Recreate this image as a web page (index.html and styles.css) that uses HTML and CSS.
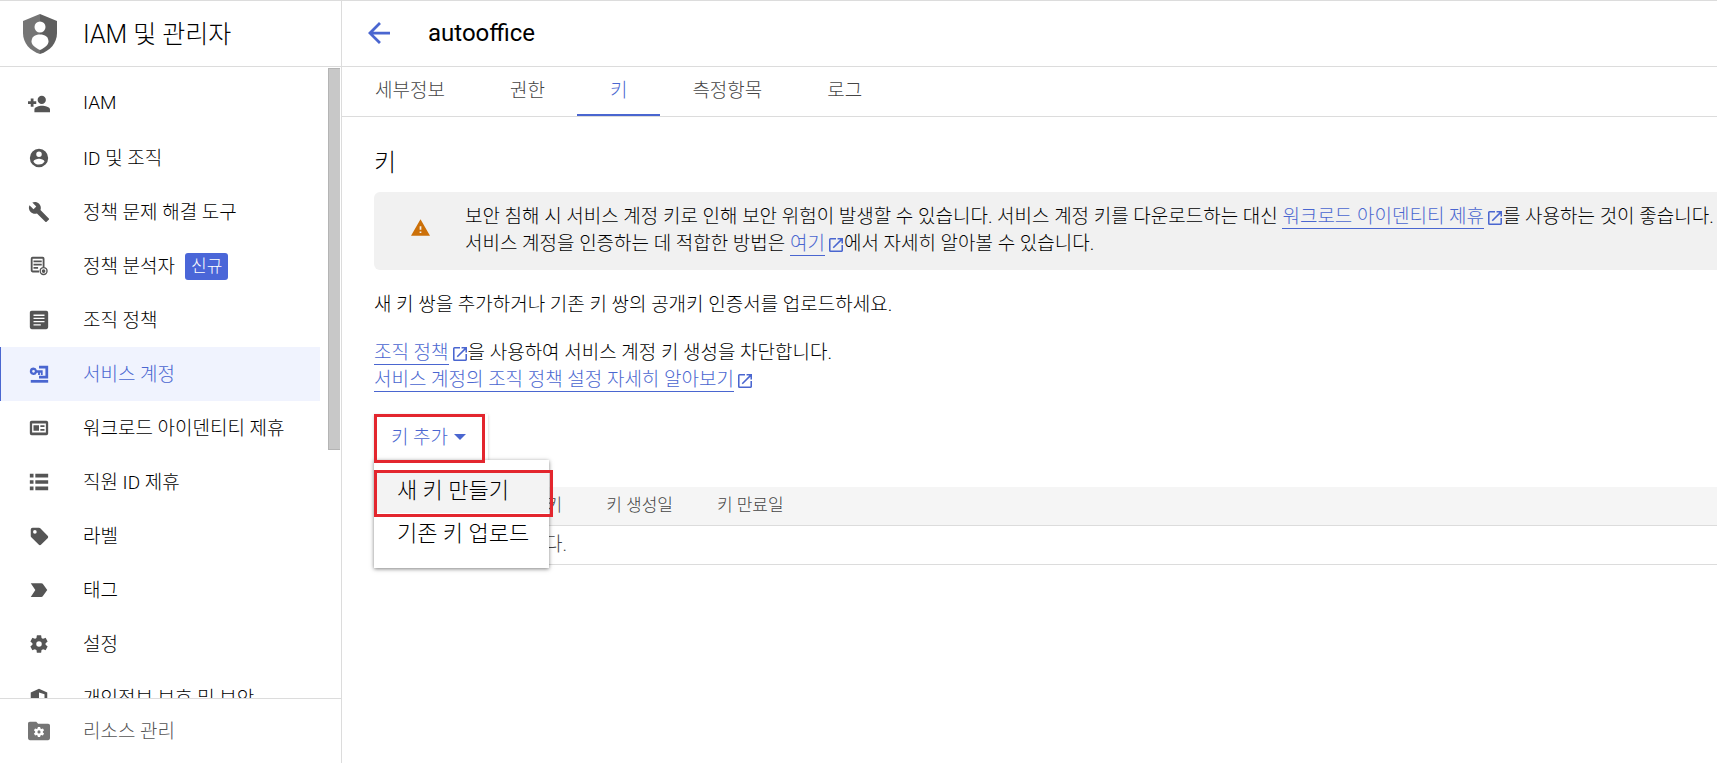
FILE: index.html
```html
<!DOCTYPE html>
<html lang="ko">
<head>
    <meta charset="UTF-8">
    <meta name="viewport" content="width=device-width, initial-scale=1.0">
    <title>IAM 및 관리자 - autooffice</title>
    <link rel="stylesheet" href="styles.css">
</head>
<body>
    <svg class="defs" aria-hidden="true">
        <symbol id="open-new" viewBox="3 3 18 18">
            <path d="M19 19H5V5h7V3H5a2 2 0 0 0-2 2v14a2 2 0 0 0 2 2h14c1.100 0 2-.9 2-2v-7h-2v7zM14 3v2h3.590l-9.830 9.830 1.410 1.410L19 6.410V10h2V3h-7z"/>
        </symbol>
    </svg>
    <div class="app">
        <aside class="sidebar">
            <div class="product">
                <svg class="shield" viewBox="0 0 34 40">
                    <path fill="#757575" d="M17 0 0 7v12c0 10 7 18 17 21z"/>
                    <path fill="#5f5f5f" d="M17 0l17 7v12c0 10-7 18-17 21z"/>
                    <circle cx="17" cy="13" r="5.500" fill="#fff"/>
                    <path fill="#fff" d="M17 20.500c5 0 8.500 2.500 8.500 7 0 3.500-4 6.500-8.500 8.500-4.500-2-8.500-5-8.500-8.500 0-4.500 3.500-7 8.500-7z"/>
                </svg>
                <span class="label">IAM 및 관리자</span>
            </div>
            <div class="nav-area">
                <nav class="nav">
                    <a href="#" class="nav-item">
                        <svg viewBox="0 0 24 24"><path d="M15 12a4.500 4.500 0 1 0 0-9 4.500 4.500 0 0 0 0 9zM6 9V6H3v3H0v3h3v3h3v-3h3V9H6zm9 5c-2.670 0-8 1.340-8 4v3h17v-3c0-2.660-5.330-4-9-4z"/></svg>
                        <span class="label">IAM</span>
                    </a>
                    <a href="#" class="nav-item">
                        <svg viewBox="0 0 24 24"><path d="M12 2a10 10 0 1 0 0 20 10 10 0 0 0 0-20zm0 3a3 3 0 1 1 0 6 3 3 0 0 1 0-6zm0 14.200a7.200 7.200 0 0 1-6-3.220c.03-1.990 4-3.080 6-3.080s5.970 1.090 6 3.080a7.200 7.200 0 0 1-6 3.220z"/></svg>
                        <span class="label">ID 및 조직</span>
                    </a>
                    <a href="#" class="nav-item">
                        <svg viewBox="0 0 24 24"><path d="M22.700 19l-9.100-9.100c.9-2.300.4-5-1.500-6.900-2-2-5-2.400-7.400-1.300L9 6 6 9 1.600 4.700C.4 7.100.9 10.100 2.900 12.100c1.900 1.900 4.600 2.400 6.900 1.500l9.100 9.100c.4.400 1 .4 1.400 0l2.300-2.300c.5-.4.5-1.100.1-1.400z"/></svg>
                        <span class="label">정책 문제 해결 도구</span>
                    </a>
                    <a href="#" class="nav-item">
                        <svg viewBox="0 0 24 24"><path d="M5 2h11a2 2 0 0 1 2 2v9h-2V4H5v13h7v2H5a2 2 0 0 1-2-2V4a2 2 0 0 1 2-2z"/><path d="M6 6h9v2H6zM6 9.500h9v2H6zM6 13h5v2H6z"/><path fill-rule="evenodd" d="M17 13a4.500 4.500 0 1 0 0 9 4.500 4.500 0 0 0 0-9zm0 1.500a3 3 0 1 1 0 6 3 3 0 0 1 0-6zm0 1a2 2 0 1 0 0 4 2 2 0 0 0 0-4z"/></svg>
                        <span class="label">정책 분석자</span>
                        <span class="badge">신규</span>
                    </a>
                    <a href="#" class="nav-item">
                        <svg viewBox="0 0 24 24"><path fill-rule="evenodd" d="M4 2h16a2 2 0 0 1 2 2v16a2 2 0 0 1-2 2H4a2 2 0 0 1-2-2V4c0-1.100.9-2 2-2zm2 4v1.500h12V6zm0 3.500V11h12V9.500zM6 13v1.500h12V13zm0 3.500V18h8v-1.500z"/></svg>
                        <span class="label">조직 정책</span>
                    </a>
                    <a href="#" class="nav-item active">
                        <svg viewBox="0 0 24 24"><path d="M12 3h10v14H12v-3h7V6h-7z"/><path fill-rule="evenodd" d="M6 5a4 4 0 1 0 3.700 5.500H11V13h2v-2.500h1V13h2V8H9.700A4 4 0 0 0 6 5zm0 2.500a1.500 1.500 0 1 1 0 3 1.500 1.500 0 0 1 0-3z"/><path d="M3 18.500h19v3H3z"/></svg>
                        <span class="label">서비스 계정</span>
                    </a>
                    <a href="#" class="nav-item">
                        <svg viewBox="0 0 24 24"><path fill-rule="evenodd" d="M4 4h16a2 2 0 0 1 2 2v12a2 2 0 0 1-2 2H4a2 2 0 0 1-2-2V6c0-1.100.9-2 2-2zm.5 3v10h15V7z"/><path d="M6 9h6v6H6zM13.500 9H18v2h-4.500zM13.500 13H18v2h-4.500z"/></svg>
                        <span class="label">워크로드 아이덴티티 제휴</span>
                    </a>
                    <a href="#" class="nav-item">
                        <svg viewBox="0 0 24 24"><path d="M2 3h4v4H2zM8 3h14v4H8zM2 10h4v4H2zM8 10h14v4H8zM2 17h4v4H2zM8 17h14v4H8z"/></svg>
                        <span class="label">직원 ID 제휴</span>
                    </a>
                    <a href="#" class="nav-item">
                        <svg viewBox="0 0 24 24"><path fill-rule="evenodd" d="M21.400 11.600l-8-8A2 2 0 0 0 12 3H5a2 2 0 0 0-2 2v7c0 .6.2 1 .6 1.400l8 8c.8.8 2 .8 2.800 0l7-7c.8-.8.8-2 0-2.800zM7.500 5.500a2 2 0 1 1 0 4 2 2 0 0 1 0-4z"/></svg>
                        <span class="label">라벨</span>
                    </a>
                    <a href="#" class="nav-item">
                        <svg viewBox="0 0 24 24"><path d="M3 19.500h11.500c.7 0 1.300-.3 1.600-.8L21 12l-4.900-6.700c-.3-.5-.9-.8-1.600-.8H3L8 12z"/></svg>
                        <span class="label">태그</span>
                    </a>
                    <a href="#" class="nav-item">
                        <svg viewBox="0 0 24 24"><path d="M19.140 12.940c.04-.3.06-.61.06-.94 0-.32-.02-.64-.07-.94l2.030-1.580a.49.49 0 0 0 .12-.61l-1.920-3.320a.49.49 0 0 0-.59-.22l-2.390.96a7 7 0 0 0-1.620-.94l-.36-2.540a.48.48 0 0 0-.48-.41h-3.840a.47.47 0 0 0-.47.41l-.36 2.540a7.400 7.400 0 0 0-1.620.94l-2.390-.96a.48.48 0 0 0-.59.22L2.740 8.870a.47.47 0 0 0 .12.61l2.030 1.580a6 6 0 0 0-.02 1.880l-2.030 1.580a.49.49 0 0 0-.12.61l1.920 3.320c.12.220.37.290.59.220l2.390-.96c.5.380 1.030.7 1.620.94l.36 2.540c.05.240.240.410.48.410h3.840c.24 0 .44-.17.47-.41l.36-2.540a7 7 0 0 0 1.620-.94l2.390.96c.22.080.47 0 .59-.22l1.920-3.320a.47.47 0 0 0-.12-.61zM12 15a3 3 0 1 1 0-6 3 3 0 0 1 0 6z"/></svg>
                        <span class="label">설정</span>
                    </a>
                    <a href="#" class="nav-item">
                        <svg viewBox="0 0 24 24"><path fill-rule="evenodd" d="M12 2l9 4v6c0 5-4 9-9 11-5-2-9-6-9-11V6zm0 4v14c4-2 6-5 6-8V8z"/></svg>
                        <span class="label">개인정보 보호 및 보안</span>
                    </a>
                </nav>
                <div class="scroll-thumb"></div>
            </div>
            <a href="#" class="nav-footer">
                <svg viewBox="0 0 24 24"><path d="M2 2h7l2 2h11a2 2 0 0 1 2 2v14a2 2 0 0 1-2 2H2a2 2 0 0 1-2-2V4c0-1.100.9-2 2-2z"/><path fill="#fff" fill-rule="evenodd" d="M10.800 7.500h2.400l.4 1.700 1 .6 1.700-.6 1.200 2.100-1.300 1.200v1l1.300 1.200-1.200 2.100-1.700-.5-1 .6-.4 1.700h-2.400l-.4-1.700-1-.6-1.700.5-1.200-2.100 1.300-1.200v-1l-1.300-1.200 1.200-2.100 1.700.6 1-.6zM12 11.300a1.700 1.700 0 1 0 0 3.400 1.700 1.700 0 0 0 0-3.400z"/></svg>
                <span class="label">리소스 관리</span>
            </a>
        </aside>

        <main class="main">
            <header class="page-header">
                <a href="#" class="back" aria-label="뒤로">
                    <svg viewBox="4 4 16 16"><path d="M20 11H7.830l5.590-5.590L12 4l-8 8 8 8 1.410-1.410L7.830 13H20z"/></svg>
                </a>
                <h1>autooffice</h1>
            </header>
            <nav class="tabs">
                <a href="#" class="tab">세부정보</a>
                <a href="#" class="tab">권한</a>
                <a href="#" class="tab active">키</a>
                <a href="#" class="tab">측정항목</a>
                <a href="#" class="tab">로그</a>
            </nav>

            <section class="content">
                <h2>키</h2>
                <div class="warning">
                    <svg class="warning-icon" viewBox="1 2 22 19"><path fill-rule="evenodd" d="M1 21h22L12 2zm12-3h-2v-2h2zm0-4h-2v-4h2z"/></svg>
                    <p>보안 침해 시 서비스 계정 키로 인해 보안 위험이 발생할 수 있습니다. 서비스 계정 키를 다운로드하는 대신 <a href="#">워크로드 아이덴티티 제휴</a><svg class="ext"><use href="#open-new"/></svg>를 사용하는 것이 좋습니다. Google Cloud에서<br>서비스 계정을 인증하는 데 적합한 방법은 <a href="#">여기</a><svg class="ext"><use href="#open-new"/></svg>에서 자세히 알아볼 수 있습니다.</p>
                </div>
                <p class="intro">새 키 쌍을 추가하거나 기존 키 쌍의 공개키 인증서를 업로드하세요.</p>
                <p class="policy"><a href="#">조직 정책</a><svg class="ext"><use href="#open-new"/></svg>을 사용하여 서비스 계정 키 생성을 차단합니다.<br><a href="#">서비스 계정의 조직 정책 설정 자세히 알아보기</a><svg class="ext"><use href="#open-new"/></svg></p>

                <div class="add-key">
                    <button type="button" class="add-button">키 추가<span class="caret"></span></button>
                    <div class="menu">
                        <button type="button" class="menu-item selected">새 키 만들기</button>
                        <button type="button" class="menu-item">기존 키 업로드</button>
                    </div>
                </div>

                <table class="keys">
                    <thead>
                        <tr><th>유형</th><th>상태</th><th>키</th><th>키 생성일</th><th>키 만료일</th></tr>
                    </thead>
                    <tbody>
                        <tr><td colspan="5">표시할 행이 없습니다.</td></tr>
                    </tbody>
                </table>
            </section>
        </main>
    </div>
</body>
</html>
```

FILE: styles.css
```css
*,
*::after {
    box-sizing: border-box;
}

body {
    margin: 0;
    font-family: Roboto, "Noto Sans CJK KR", sans-serif;
    font-size: 19px;
    font-weight: 300;
    color: #000;
    background-color: #fff;
}

h1, h2, p {
    margin: 0;
}

a {
    color: #4a66d0;
    text-decoration: none;
}

button {
    font-family: inherit;
    font-weight: inherit;
    border: none;
    cursor: pointer;
}

.defs {
    display: none;
}

.app {
    display: flex;
    height: 100vh;
    border-top: 1px solid #dcdcdc;
    overflow: hidden;
}

/* sidebar */
.sidebar {
    display: flex;
    flex-direction: column;
    flex: none;
    width: 342px;
    border-right: 1px solid #dcdcdc;
}

.product {
    display: flex;
    align-items: center;
    gap: 26px;
    height: 66px;
    padding: 0 23px;
    font-size: 25px;
    border-bottom: 1px solid #dcdcdc;
}

.shield {
    width: 34px;
    height: 40px;
}

.label {
    padding-bottom: 4px;
}

.nav-area {
    display: flex;
    justify-content: space-between;
    flex: 1;
    min-height: 0;
    overflow: hidden;
}

.nav {
    width: 320px;
    padding-top: 10px;
}

.nav-item,
.nav-footer {
    display: flex;
    align-items: center;
    height: 54px;
    padding-left: 28px;
    color: #000;
}

.nav-item svg,
.nav-footer svg {
    flex: none;
    width: 22px;
    height: 22px;
    margin-right: 33px;
    fill: #555;
}

.nav-item.active {
    padding-left: 27px;
    border-left: 1px solid #4a66d0;
    background-color: #f0f3fe;
    color: #4a66d0;
}

.nav-item.active svg {
    fill: #4a66d0;
}

.badge {
    margin-left: 10px;
    padding: 0 6px;
    line-height: 27px;
    font-size: 17px;
    color: #fff;
    background-color: #4a66d8;
    border-radius: 3px;
}

.scroll-thumb {
    width: 12px;
    height: 382px;
    margin: 1px 1px 0 0;
    background-color: #c8c8c8;
    border: 1px solid #b4b4b4;
    border-right: none;
}

.nav-footer {
    height: 65px;
    border-top: 1px solid #dcdcdc;
    color: #555;
}

.nav-footer svg {
    fill: #757575;
}

/* main column */
.main {
    flex: 1;
    min-width: 0;
    overflow: hidden;
}

.page-header {
    display: flex;
    align-items: center;
    gap: 38px;
    height: 66px;
    padding: 0 0 2px 26px;
    border-bottom: 1px solid #dcdcdc;
}

.page-header h1 {
    font-size: 24px;
    font-weight: 400;
}

.back svg {
    display: block;
    width: 22px;
    height: 22px;
    fill: #4a66d0;
}

.tabs {
    display: flex;
    height: 50px;
    border-bottom: 1px solid #dcdcdc;
}

.tab {
    padding: 0 33px;
    line-height: 48px;
    color: #444;
}

.tab + .tab {
    margin-left: -1px;
}

.tab.active {
    color: #4a66d0;
    border-bottom: 2px solid #4a66d0;
}

.content {
    padding: 28px 0 0 32px;
}

.content h2 {
    font-size: 24px;
    font-weight: 300;
    line-height: 36px;
}

.warning {
    display: flex;
    align-items: center;
    margin-top: 11px;
    padding: 11px 0 13px 37px;
    background-color: #f1f1f1;
    border-radius: 6px 0 0 6px;
    white-space: nowrap;
}

.warning p,
.policy {
    line-height: 27px;
}

.warning-icon {
    flex: none;
    width: 19px;
    height: 17px;
    margin: 0 35px 5px 0;
    fill: #cc7009;
}

.content p a {
    border-bottom: 1px solid #4a66d0;
}

.ext {
    width: 14px;
    height: 14px;
    margin: 0 1px 0 4px;
    vertical-align: -2px;
    fill: #4a66d0;
}

.intro {
    margin-top: 21px;
    line-height: 27px;
}

.policy {
    margin-top: 21px;
}

.add-key {
    position: relative;
    width: 114px;
    margin-top: 21px;
}

.add-button {
    display: flex;
    align-items: center;
    gap: 6px;
    width: 114px;
    height: 46px;
    padding: 0 0 4px 17px;
    font-size: 19px;
    color: #4a66d0;
    background-color: #fff;
    box-shadow: 0 1px 3px rgba(0, 0, 0, 0.2);
}

.add-button::after {
    content: "";
    position: absolute;
    top: 0;
    left: 0;
    z-index: 2;
    width: 111px;
    height: 49px;
    border: 3px solid #e3262e;
}

.caret {
    margin-top: 3px;
    border: 6px solid transparent;
    border-top-color: #4a66d0;
    border-bottom: none;
}

.menu {
    position: absolute;
    top: 46px;
    left: 0;
    z-index: 1;
    width: 175px;
    padding: 10px 0 12px;
    background-color: #fff;
    box-shadow: 0 1px 4px rgba(0, 0, 0, 0.5);
}

.menu-item {
    display: block;
    width: 100%;
    height: 43px;
    padding: 0 0 8px 23px;
    font-size: 22px;
    text-align: left;
    white-space: nowrap;
    color: #000;
    background-color: #fff;
}

.menu-item.selected {
    position: relative;
    background-color: #f3f3f3;
}

.menu-item.selected::after {
    content: "";
    position: absolute;
    top: 0;
    left: 0;
    width: 179px;
    height: 47px;
    border: 3px solid #e3262e;
}

.keys {
    width: 100%;
    margin-top: 27px;
    border-collapse: collapse;
    color: #444;
}

.keys th {
    height: 38px;
    padding: 0 22px 4px;
    font-size: 17px;
    font-weight: 300;
    text-align: left;
    white-space: nowrap;
    background-color: #f5f5f5;
    border-bottom: 1px solid #dcdcdc;
}

.keys th:last-child {
    width: 100%;
}

.keys td {
    height: 39px;
    padding: 0 22px 4px;
    border-bottom: 1px solid #dcdcdc;
}
```
